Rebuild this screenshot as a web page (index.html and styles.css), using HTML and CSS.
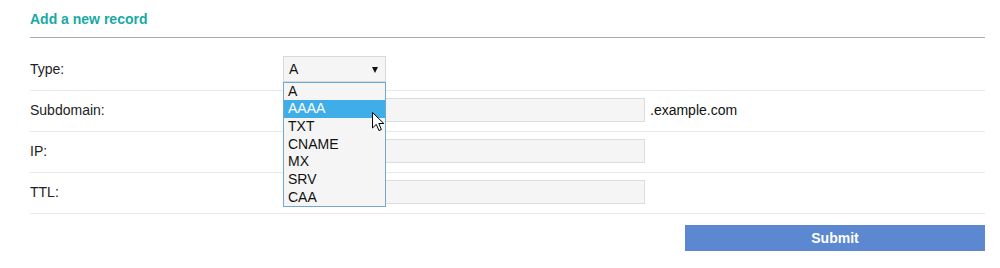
FILE: index.html
```html
<!DOCTYPE html>
<html lang="en">
<head>
    <meta charset="UTF-8">
    <meta name="viewport" content="width=device-width, initial-scale=1.0">
    <title>Add a new record</title>
    <link rel="stylesheet" href="styles.css">
</head>
<body>
    <div class="container">
        <h3 class="title">Add a new record</h3>

        <form class="record-form">
            <!-- Type row, with the select opened -->
            <div class="row row-first">
                <label>Type:</label>
                <div class="field">
                    <div class="select-wrap">
                        <div class="select">A<span class="caret"></span></div>
                        <ul class="options">
                            <li>A</li>
                            <li class="active">AAAA</li>
                            <li>TXT</li>
                            <li>CNAME</li>
                            <li>MX</li>
                            <li>SRV</li>
                            <li>CAA</li>
                        </ul>
                        <svg class="pointer" width="13" height="20" viewBox="0 0 13 20">
                            <path d="M0.5 0.5 L0.5 16 L4.3 12.4 L7 18.6 L9.4 17.5 L6.8 11.5 L11.8 11.5 Z" fill="#fff" stroke="#000" stroke-width="1"/>
                        </svg>
                    </div>
                </div>
            </div>

            <div class="row">
                <label>Subdomain:</label>
                <div class="field">
                    <input type="text" class="input">
                    <span class="suffix">.example.com</span>
                </div>
            </div>

            <div class="row">
                <label>IP:</label>
                <div class="field">
                    <input type="text" class="input">
                </div>
            </div>

            <div class="row">
                <label>TTL:</label>
                <div class="field">
                    <input type="text" class="input">
                </div>
            </div>

            <div class="actions">
                <button type="button" class="button">Submit</button>
            </div>
        </form>
    </div>
</body>
</html>
```

FILE: styles.css
```css
body {
    font-family: "Liberation Sans", Arial, sans-serif;
    font-size: 14px;
    color: #222;
    background-color: #fff;
    margin: 0;
    padding: 0;
}
.container {
    width: 955px;
    padding-left: 30px;
}
.title {
    margin: 0;
    padding: 9px 0 8px;
    line-height: 20px;
    font-size: 14px;
    font-weight: bold;
    color: #17a9a5;
    border-bottom: 1px solid #aaa;
}
.row {
    display: grid;
    grid-template-columns: 253px auto;
    align-items: center;
    height: 38px;
    padding-bottom: 2px;
    border-bottom: 1px solid #e8e8e8;
}
.row-first {
    margin-top: 11px;
    height: 39px;
}
.field {
    display: flex;
    align-items: center;
}
.select-wrap {
    position: relative;
}
.select {
    box-sizing: border-box;
    width: 103px;
    height: 26px;
    line-height: 24px;
    padding-left: 5px;
    background-color: #f5f5f5;
    border: 1px solid #d9d9d9;
    color: #111;
    position: relative;
}
.caret {
    position: absolute;
    right: 7px;
    top: 10px;
    border-left: 3px solid transparent;
    border-right: 3px solid transparent;
    border-top: 6px solid #111;
}
.options {
    position: absolute;
    top: 26px;
    left: 0;
    box-sizing: border-box;
    width: 103px;
    margin: 0;
    padding: 0;
    list-style: none;
    background-color: #f5f5f5;
    border: 1px solid #6fa8d6;
    z-index: 2;
}
.options li {
    height: 17.7px;
    line-height: 17.7px;
    padding-left: 4px;
    color: #111;
}
.options li.active {
    background-color: #3fade8;
    color: #fff;
}
.pointer {
    position: absolute;
    left: 89px;
    top: 56px;
    z-index: 3;
}
.input {
    box-sizing: border-box;
    width: 362px;
    height: 24px;
    margin: 0;
    background-color: #f5f5f5;
    border: 1px solid #dcdcdc;
}
.suffix {
    margin-left: 5px;
    color: #111;
}
.actions {
    display: flex;
    justify-content: flex-end;
    padding-top: 11px;
}
.button {
    width: 300px;
    height: 26px;
    padding: 0;
    background-color: #5b88d0;
    color: #fff;
    font-family: "Liberation Sans", Arial, sans-serif;
    font-size: 14px;
    font-weight: bold;
    border: none;
    cursor: pointer;
}
```
